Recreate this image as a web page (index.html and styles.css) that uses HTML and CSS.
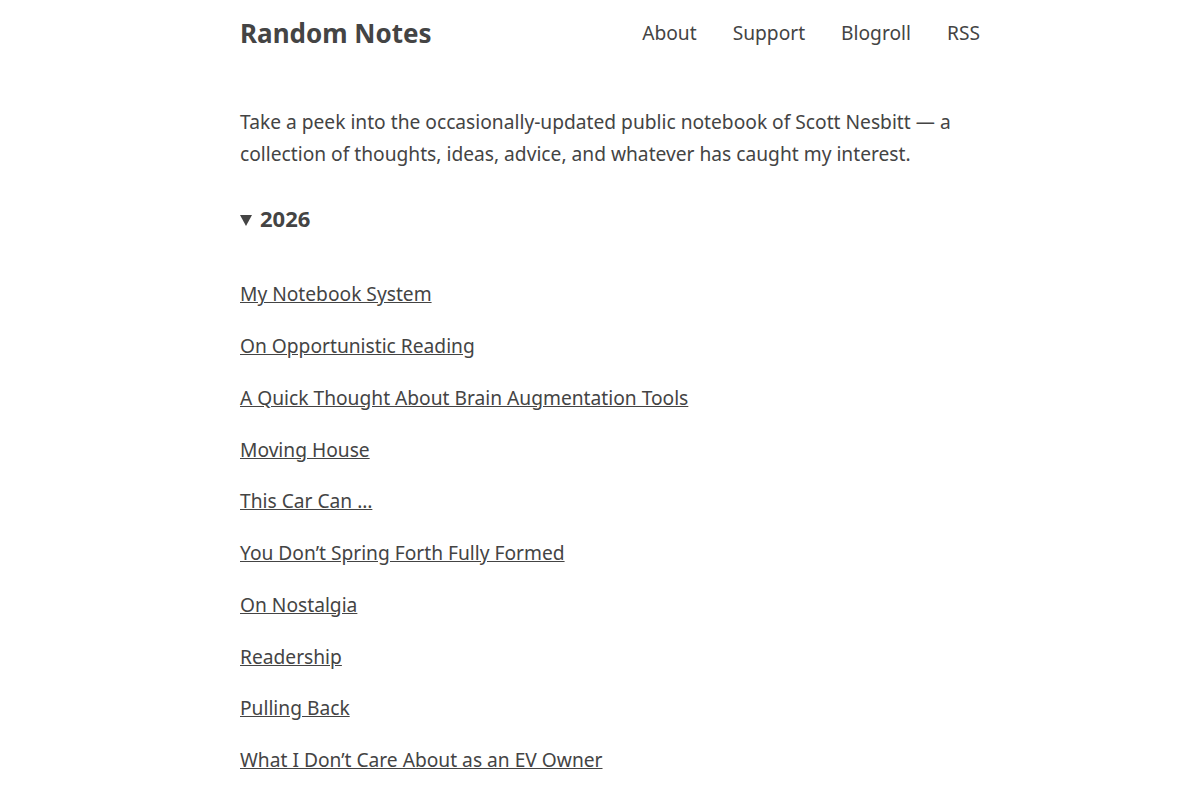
FILE: index.html
```html
<!DOCTYPE html>
<html lang="en">
<head>
<meta charset="utf-8">
<title>Random Notes</title>
<link rel="stylesheet" href="styles.css">
</head>
<body>
<div class="wrap">
  <header class="site-header">
    <a class="site-title" href="#">Random Notes</a>
    <nav class="nav">
      <a href="#">About</a>
      <a href="#">Support</a>
      <a href="#">Blogroll</a>
      <a href="#">RSS</a>
    </nav>
  </header>
  <main>
    <p class="intro">Take a peek into the occasionally-updated public notebook of Scott Nesbitt — a collection of thoughts, ideas, advice, and whatever has caught my interest.</p>
    <details class="year" open>
      <summary>2026</summary>
      <ul class="posts">
        <li><a href="#">My Notebook System</a></li>
        <li><a href="#">On Opportunistic Reading</a></li>
        <li><a href="#">A Quick Thought About Brain Augmentation Tools</a></li>
        <li><a href="#">Moving House</a></li>
        <li><a href="#">This Car Can …</a></li>
        <li><a href="#">You Don’t Spring Forth Fully Formed</a></li>
        <li><a href="#">On Nostalgia</a></li>
        <li><a href="#">Readership</a></li>
        <li><a href="#">Pulling Back</a></li>
        <li><a href="#">What I Don’t Care About as an EV Owner</a></li>
      </ul>
    </details>
  </main>
</div>
</body>
</html>
```
FILE: styles.css
```css
html, body {
  margin: 0;
  padding: 0;
  background: #fff;
}
body {
  font-family: "Noto Sans", "Open Sans", sans-serif;
  font-size: 19.2px;
  line-height: 1.7;
  color: #444;
}
.wrap {
  width: 740px;
  margin: 0 auto;
  padding-left: 20px;
}
.site-header {
  display: flex;
  justify-content: space-between;
  align-items: center;
  height: 66px;
}
.site-title {
  font-size: 26px;
  font-weight: 700;
  color: #444;
  text-decoration: none;
}
.nav {
  display: flex;
  gap: 36px;
}
.nav a {
  color: #444;
  text-decoration: none;
}
.intro {
  margin: 40px 0 0;
  line-height: 32px;
}
.year {
  margin-top: 30px;
}
.year summary {
  display: flex;
  align-items: center;
  list-style: none;
  font-size: 22px;
  font-weight: 700;
  cursor: pointer;
}
.year summary::-webkit-details-marker {
  display: none;
}
.year summary::before {
  content: "";
  width: 0;
  height: 0;
  border-left: 6px solid transparent;
  border-right: 6px solid transparent;
  border-top: 11px solid #444;
  margin: 3px 8px 0 0;
}
.posts {
  list-style: none;
  padding: 0;
  margin: 41px 0 0;
}
.posts li {
  margin: 0 0 19.1px;
}
.posts a {
  color: #444;
  text-decoration: underline;
}
```
